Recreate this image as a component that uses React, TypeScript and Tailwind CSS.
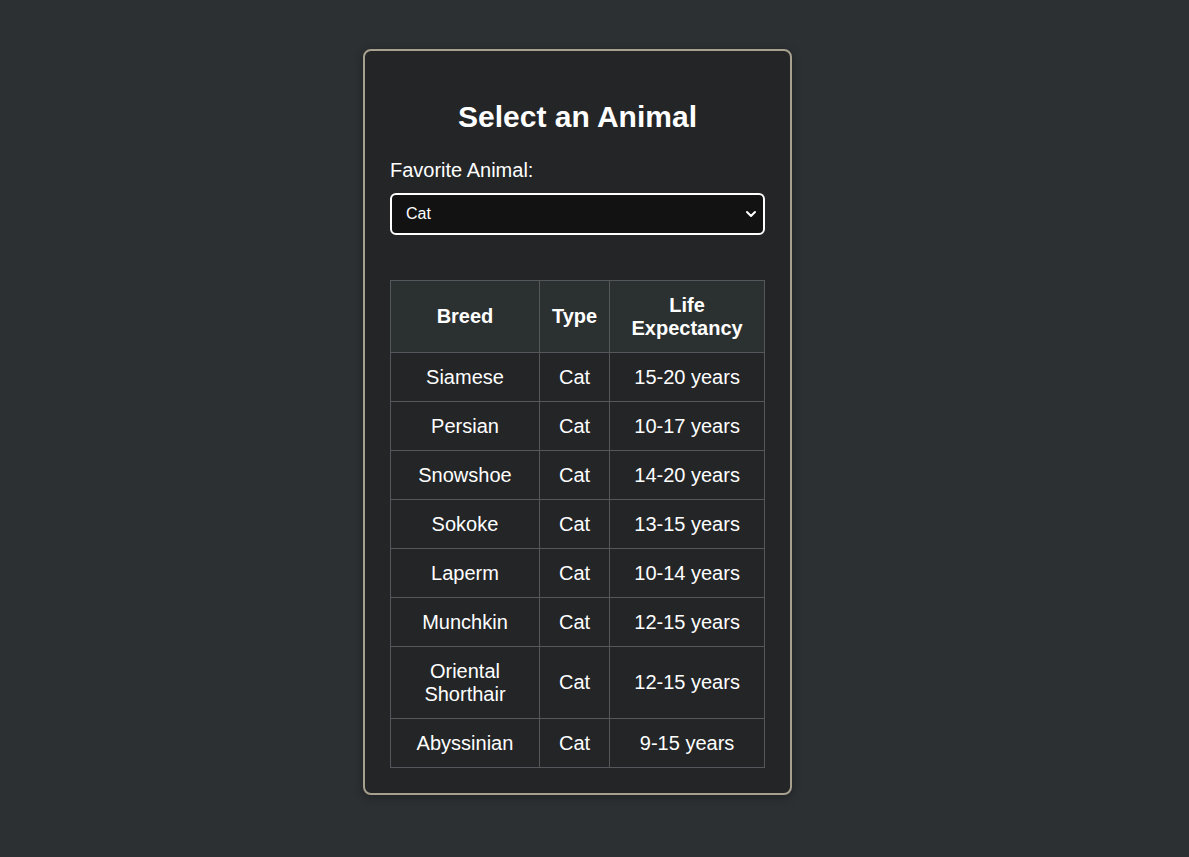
import React from 'react';
import { ChevronDown } from 'lucide-react';

const breeds = [
  { name: 'Siamese', type: 'Cat', life: '15-20 years' },
  { name: 'Persian', type: 'Cat', life: '10-17 years' },
  { name: 'Snowshoe', type: 'Cat', life: '14-20 years' },
  { name: 'Sokoke', type: 'Cat', life: '13-15 years' },
  { name: 'Laperm', type: 'Cat', life: '10-14 years' },
  { name: 'Munchkin', type: 'Cat', life: '12-15 years' },
  { name: 'Oriental Shorthair', type: 'Cat', life: '12-15 years' },
  { name: 'Abyssinian', type: 'Cat', life: '9-15 years' },
];

const App = () => {
  return (
    <div className="min-h-[857px] bg-[#2c3033] font-['Liberation_Sans',Arial,sans-serif] text-white">
      <div className="flex justify-center pt-[49px] pb-[60px] pr-[34px]">
        <div className="w-[429px] rounded-[8px] border-2 border-[#a8a08f] bg-[#232527] p-[25px] shadow-[0_2px_10px_rgba(0,0,0,0.3)]">
          <h1 className="mt-[24px] text-center text-[30px] font-bold leading-[34px]">Select an Animal</h1>

          <label className="mt-[25px] block text-[20px] leading-[23px]">Favorite Animal:</label>

          <div className="relative mt-[11px]">
            <select
              defaultValue="Cat"
              className="block h-[42px] w-full appearance-none rounded-[6px] border-2 border-white bg-[#121212] px-[14px] text-[16px] text-white outline-none"
            >
              <option>Cat</option>
              <option>Dog</option>
            </select>
            <ChevronDown
              className="pointer-events-none absolute right-[6px] top-1/2 -translate-y-1/2 text-white"
              size={16}
              strokeWidth={3}
            />
          </div>

          <table className="mt-[45px] w-full border-collapse text-center text-[20px] leading-[23px]">
            <thead>
              <tr className="bg-[#2b3031]">
                <th className="border border-[#54585c] px-[12px] py-[12.5px] font-bold">Breed</th>
                <th className="border border-[#54585c] px-[12px] py-[12.5px] font-bold">Type</th>
                <th className="border border-[#54585c] px-[12px] py-[12.5px] font-bold">Life Expectancy</th>
              </tr>
            </thead>
            <tbody>
              {breeds.map((b) => (
                <tr key={b.name}>
                  <td className="border border-[#54585c] px-[12px] py-[12.5px]">{b.name}</td>
                  <td className="border border-[#54585c] px-[12px] py-[12.5px]">{b.type}</td>
                  <td className="border border-[#54585c] px-[12px] py-[12.5px]">{b.life}</td>
                </tr>
              ))}
            </tbody>
          </table>
        </div>
      </div>
    </div>
  );
};

export default App;
